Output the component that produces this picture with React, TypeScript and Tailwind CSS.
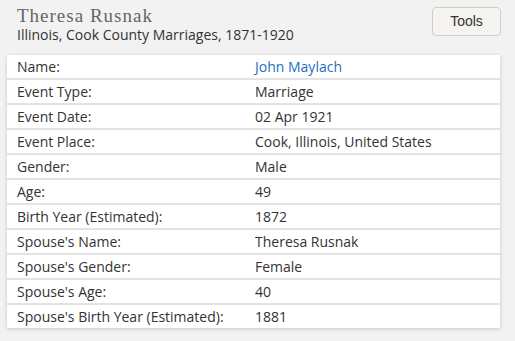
import React from "react";

const rows: [string, string, boolean?][] = [
  ["Name:", "John Maylach", true],
  ["Event Type:", "Marriage"],
  ["Event Date:", "02 Apr 1921"],
  ["Event Place:", "Cook, Illinois, United States"],
  ["Gender:", "Male"],
  ["Age:", "49"],
  ["Birth Year (Estimated):", "1872"],
  ["Spouse's Name:", "Theresa Rusnak"],
  ["Spouse's Gender:", "Female"],
  ["Spouse's Age:", "40"],
  ["Spouse's Birth Year (Estimated):", "1881"],
];

export default function App() {
  return (
    <div className="w-[515px] h-[341px] bg-[#f2f2f2] overflow-hidden" style={{ fontFamily: '"Open Sans", sans-serif' }}>
      <div className="flex justify-between items-start pl-[17px] pr-[14px] pt-[5px] h-[55px]">
        <div className="flex flex-col">
          <div className="text-[19px] leading-[22px] tracking-[1px] text-[#666]" style={{ fontFamily: '"Liberation Serif", serif' }}>
            Theresa Rusnak
          </div>
          <div className="text-[14px] leading-[18px] text-[#333] mt-[-1px]">Illinois, Cook County Marriages, 1871-1920</div>
        </div>
        <button className="mt-[2px] w-[69px] h-[29px] rounded-[4px] border border-[#cfcdc6] bg-[#f5f4f0] text-[14px] text-[#333]" style={{ fontFamily: '"Liberation Sans", Arial, sans-serif' }}>
          Tools
        </button>
      </div>
      <div className="ml-[7px] w-[493px] bg-white shadow-[0_1px_4px_rgba(0,0,0,0.18)]">
        {rows.map(([k, v, link], i) => (
          <div
            key={k}
            className={`flex items-center text-[14px] text-[#333] ${i < rows.length - 1 ? "h-[25px] border-b-2 border-[#e3e3e3]" : "h-[23px]"}`}
          >
            <div className="w-[248px] pl-[10px]">{k}</div>
            <div className={link ? "text-[#1f6fbf]" : ""}>{v}</div>
          </div>
        ))}
      </div>
    </div>
  );
}
